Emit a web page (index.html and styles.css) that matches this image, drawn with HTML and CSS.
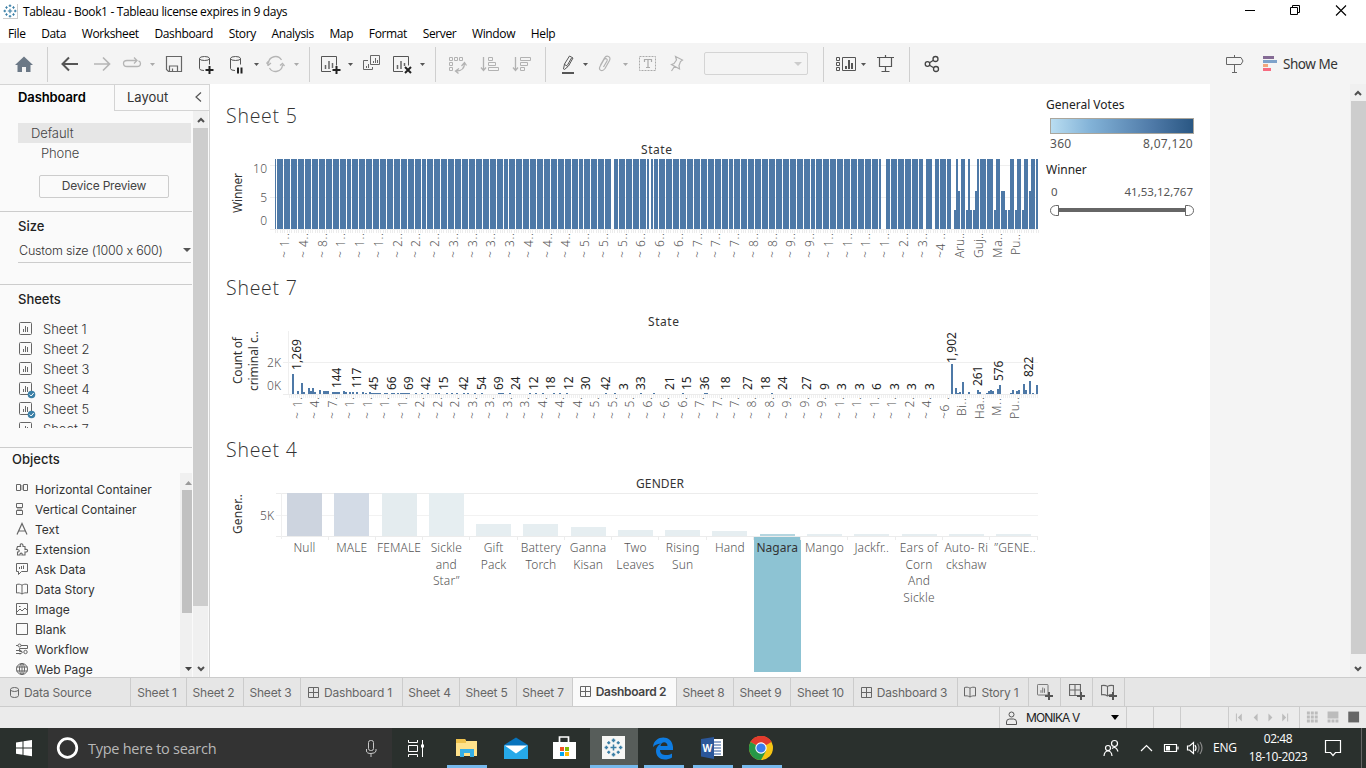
FILE: index.html
```html
<!DOCTYPE html>
<html lang="en">
<head>
<meta charset="utf-8">
<title>Tableau - Book1</title>
<link rel="stylesheet" href="styles.css">
</head>
<body>
<svg class="defs" width="0" height="0" aria-hidden="true">
  <symbol id="spark" viewBox="0 0 16 16"><g fill="none" stroke="#3b7fa6" stroke-width="1.3"><path d="M8 5.5v5M5.5 8h5"/><path d="M8 .5v3M6.5 2h3M8 12.500v3M6.500 14h3M.5 8h3M2 6.500v3M12.500 8h3M14 6.500v3M4 2.700v2.600M2.700 4h2.600M12 2.700v2.600M10.700 4h2.600M4 10.700v2.600M2.700 12h2.600M12 10.700v2.600M10.700 12h2.600"/></g></symbol>
  <symbol id="sheet" viewBox="0 0 17 17"><rect x=".5" y=".5" width="12" height="12" rx="1" fill="none" stroke="#666"/><path d="M4.500 7v3M6.500 4v6M8.500 5v5" stroke="#666" fill="none"/></symbol>
  <symbol id="grid" viewBox="0 0 11 11"><path d="M.5.5h10v10H.5zM5.500.5v10M.5 5.500h10" fill="none" stroke="#666"/></symbol>
  <symbol id="book" viewBox="0 0 12 12"><path d="M.5 1.500C2.500 1 4 1 6 2.200 8 1 9.500 1 11.500 1.500v8.500C9.500 9.600 8 9.800 6 11 4 9.800 2.500 9.600.5 10zM6 2.200V11" fill="none" stroke="#666"/></symbol>
  <symbol id="up" viewBox="0 0 8 6"><path d="M1 5l3-3 3 3" fill="none" stroke="#505050" stroke-width="2"/></symbol>
  <symbol id="down" viewBox="0 0 8 6"><path d="M1 1l3 3 3-3" fill="none" stroke="#505050" stroke-width="2"/></symbol>
</svg>

<header class="titlebar">
  <svg class="logo" width="15" height="15"><use href="#spark"/></svg>
  <span class="title">Tableau - Book1 - Tableau license expires in 9 days</span>
  <svg class="winbuttons" width="136" height="23" viewBox="1230 0 136 23" fill="none" stroke="#000"><path d="M1245 10.500h10"/><path d="M1290.500 7.500h7v7h-7zM1292.500 7V5.500h7v7H1298"/><path d="M1336 5.500l10 10M1346 5.500l-10 10" stroke-width="1.100"/></svg>
</header>
<nav class="menu">
  <span>File</span><span>Data</span><span>Worksheet</span><span>Dashboard</span><span>Story</span><span>Analysis</span><span>Map</span><span>Format</span><span>Server</span><span>Window</span><span>Help</span>
</nav>

<div class="toolbar">
  <svg width="47" height="40" viewBox="0 44 47 40"><path d="M15 65l9-8.500L33 65h-2.500v7H26v-5h-4v5h-4.500v-7z" fill="#6b7886"/></svg>
  <i class="sep"></i>
  <svg width="42" height="40" viewBox="48 44 42 40"><path d="M78 64H63M69 57.500L62.500 64l6.500 6.500" fill="none" stroke="#555" stroke-width="2"/></svg>
  <svg width="28" height="40" viewBox="90 44 28 40"><path d="M94 64h15M103 57.500l6.500 6.500-6.500 6.500" fill="none" stroke="#b5b5b5" stroke-width="1.700"/></svg>
  <svg width="42" height="40" viewBox="118 44 42 40"><path d="M132 60.500h-5q-3.500 0-3.500 3t3.500 3h10q3.500 0 3.500-3 0-2-2-2.700M132 60.500h5M134 57.500l3 3-3 3" fill="none" stroke="#b5b5b5" stroke-width="1.300"/><path d="M150 63h5l-2.500 3z" fill="#aaa"/></svg>
  <svg width="30" height="40" viewBox="160 44 30 40"><path d="M166.500 56.500h15v15h-13l-2-2zM169.500 71v-5h8v5M172.500 68.500v3" fill="none" stroke="#666" stroke-width="1.200"/></svg>
  <svg width="30" height="40" viewBox="190 44 30 40"><g fill="none" stroke="#555"><ellipse cx="204.500" cy="58.500" rx="5" ry="2"/><path d="M199.500 58.500v10q0 2 4.500 2M209.500 58.500v6"/></g><path d="M209.500 66v8M205.500 70h8" stroke="#222" stroke-width="2"/></svg>
  <svg width="42" height="40" viewBox="220 44 42 40"><g fill="none" stroke="#555"><ellipse cx="235.500" cy="58.500" rx="5" ry="2"/><path d="M230.500 58.500v10q0 2 4.500 2M240.500 58.500v6"/></g><path d="M238 67.500v6M241.500 67.500v6" stroke="#222" stroke-width="2"/><path d="M254 63h5l-2.500 3z" fill="#555"/></svg>
  <svg width="47" height="40" viewBox="262 44 47 40"><path d="M268.500 63a7 7 0 0 1 13-3M282.500 65a7 7 0 0 1-13 3M268 66v-5M266.500 62.500l2 2.500 2.500-2M284.500 66l-2-2.500-2.500 2" fill="none" stroke="#b5b5b5" stroke-width="1.300"/><path d="M294 63h5l-2.500 3z" fill="#aaa"/></svg>
  <i class="sep"></i>
  <svg width="48" height="40" viewBox="310 44 48 40"><path d="M331 71.500h-9.500v-15h15v9" fill="none" stroke="#555"/><path d="M325.500 65v4M329 61v8M332.500 63v5" stroke="#666" stroke-width="1.500"/><path d="M336.500 66v8M332.500 70h8" stroke="#222" stroke-width="2"/><path d="M348 63h5l-2.500 3z" fill="#555"/></svg>
  <svg width="28" height="40" viewBox="358 44 28 40" fill="none" stroke="#666"><path d="M370.500 55.500h9v9h-9zM368 60.500h-4.500v9h9V67M373.500 61v2M375.500 58v5M377.500 60v3M366.500 66v2M368.500 64v4"/></svg>
  <svg width="49" height="40" viewBox="386 44 49 40"><path d="M403 71.500h-9.500v-15h15v9" fill="none" stroke="#555"/><path d="M397.500 65v4M401 61v8M404.500 63v3" stroke="#666" stroke-width="1.500"/><path d="M405 67l6 6M411 67l-6 6" stroke="#222" stroke-width="2"/><path d="M420 63h5l-2.500 3z" fill="#555"/></svg>
  <i class="sep"></i>
  <svg width="37" height="40" viewBox="436 44 37 40" fill="none" stroke="#b2b2b2"><path d="M449.500 57.500h3v3h-3zM454.500 57.500h3v3h-3zM459.500 57.500h3v3h-3zM449.500 62.500h3v3h-3zM449.500 67.500h3v3h-3z"/><path d="M464.500 63q0 8-8 8M461.500 66l3-3.500 2 3M459 68.500l-3.500 2.500 3 2.500" stroke-width="1.300"/></svg>
  <svg width="32" height="40" viewBox="473 44 32 40" fill="none" stroke="#b2b2b2"><path d="M483.500 57v13M481 67.500l2.500 3 2.500-3" stroke-width="1.300"/><path d="M488.500 57.500h4v3h-4zM488.500 62.500h7v3h-7zM488.500 67.500h10v3h-10z"/></svg>
  <svg width="40" height="40" viewBox="505 44 40 40" fill="none" stroke="#b2b2b2"><path d="M515.500 57v13M513 67.500l2.500 3 2.500-3" stroke-width="1.300"/><path d="M520.500 57.500h10v3h-10zM520.500 62.500h7v3h-7zM520.500 67.500h4v3h-4z"/></svg>
  <i class="sep"></i>
  <svg width="47" height="40" viewBox="546 44 47 40"><path d="M563.500 69l1-5 5-8 3.500 2-4.500 8-4 3.500zM564.500 64.500l3.500 2M567.500 65l4-7" fill="none" stroke="#555"/><path d="M562 73h12" stroke="#555" stroke-width="2"/><path d="M583 63h5l-2.500 3z" fill="#555"/></svg>
  <svg width="40" height="40" viewBox="593 44 40 40"><path d="M600.500 65l4-7c2-3.500 7-1.500 5 2.500l-4.500 8c-3 4-7 1.500-5-2l4-7c1.500-2 4-.5 3 1.500l-3.500 6" fill="none" stroke="#b2b2b2" stroke-width="1.200"/><path d="M623 63h5l-2.500 3z" fill="#aaa"/></svg>
  <svg width="29" height="40" viewBox="633 44 29 40" fill="none" stroke="#aaa"><rect x="639.500" y="56.500" width="16" height="14" stroke-dasharray="2 1"/><path d="M644.500 62v-2.500h7V62M648 59.500v8M646 67.500h4" stroke-width="1.200"/></svg>
  <svg width="38" height="40" viewBox="662 44 38 40" fill="none" stroke="#b2b2b2"><path d="M675.500 56.500l7 3.500-2 1.500-1.500 4 .5 3.500-8-4.500 2.500-1 2.500-3.500zM674.500 66.500l-3 4.500" stroke-width="1.200"/></svg>
  <span class="combo"><svg width="8" height="4"><path d="M0 0h8l-4 4z" fill="#ccc"/></svg></span>
  <i class="sep after-combo"></i>
  <svg width="49" height="40" viewBox="824 44 49 40"><path d="M836.500 57.500h3v3h-3zM836.500 62.500h3v3h-3zM836.500 67.500h3v3h-3zM842.500 57.500h13v13h-13z" fill="none" stroke="#555"/><path d="M846 66v3M849 60v9M852 63v6" stroke="#555" stroke-width="2"/><path d="M861 63h5l-2.500 3z" fill="#555"/></svg>
  <svg width="36" height="40" viewBox="873 44 36 40" fill="none" stroke="#555"><path d="M877 57.500h17M879.500 58v8.500h12V58M885.500 55v2M885.500 66.500v5M881.500 71.500h8" stroke-width="1.200"/></svg>
  <i class="sep"></i>
  <svg width="40" height="40" viewBox="910 44 40 40" fill="none" stroke="#444" stroke-width="1.300"><circle cx="927.500" cy="64" r="2.300"/><circle cx="935.500" cy="59" r="2.500"/><circle cx="936" cy="69" r="2.500"/><path d="M929.500 62.700l4-2.500M929.500 65.300l4.200 2.500"/></svg>
  <svg class="sign" width="30" height="40" viewBox="1225 44 30 40" fill="none" stroke="#666"><path d="M1226.500 57.500h14.500l2 3.500-2 3.500h-14.500zM1234.500 55v2.500M1234.500 64.500v7.500M1232 72.500h5"/></svg>
  <svg width="28" height="40" viewBox="1255 44 28 40"><path d="M1263 56h11v3h-11z" fill="#846a94"/><path d="M1263 60h14v3h-14z" fill="#7ea2ca"/><path d="M1263 64h5v3h-5z" fill="#f1a67c"/><path d="M1263 68h8v3h-8z" fill="#f76b80"/></svg>
  <span class="showme">Show Me</span>
</div>

<main class="main">
  <aside class="side">
    <div class="side-tabs"><b>Dashboard</b><span class="layout">Layout</span><svg width="24" height="25" viewBox="185 85 24 25"><path d="M201 92.500l-5 4.500 5 4.500" fill="none" stroke="#555" stroke-width="1.200"/></svg></div>
    <div class="side-row">
      <div class="side-body">
        <div class="device"><div class="default">Default</div><div class="phone">Phone</div><div class="preview">Device Preview</div></div>
        <div class="size"><h3>Size</h3><div class="select"><span>Custom size (1000 x 600)</span><svg width="8" height="4"><path d="M0 0h8l-4 4z" fill="#555"/></svg></div></div>
        <div class="sheets"><h3>Sheets</h3><div class="sheet-list" id="sheet-list"></div></div>
        <div class="objects">
          <div class="obj-left"><h3>Objects</h3>
            <ul>
              <li><svg width="14" height="14" fill="none" stroke="#666"><path d="M1.500 2.500h4v6h-4zM8.500 2.500h4v6h-4z"/><path d="M6 3h2v5H6z" fill="#bbb" stroke="none"/></svg>Horizontal Container</li>
              <li><svg width="14" height="14" fill="none" stroke="#666"><path d="M1.500 1.500h6v4h-6zM1.500 8.500h6v4h-6z"/><path d="M2 6h5v2H2z" fill="#bbb" stroke="none"/></svg>Vertical Container</li>
              <li><svg width="14" height="14" fill="none" stroke="#666" stroke-width="1.200"><path d="M2 12.500L7 1.500l5 11M3.500 9h7"/></svg>Text</li>
              <li><svg width="14" height="14" fill="none" stroke="#666" stroke-width="1.100"><path d="M2.500 4.500h3c-1.500-3.500 3-4 2.500 0h2v3c3.500-1 3.500 3 0 2.500v3H7c1-2.500-2.500-2.500-2 0H2.500V10C5 10 5 7 1.500 7.500z"/></svg>Extension</li>
              <li><svg width="14" height="14" fill="none" stroke="#666"><path d="M1.500 1.500h11v8h-6L3.500 12.500v-3h-2zM4.500 5v2M6.500 4v3M8.500 3.500V7"/></svg>Ask Data</li>
              <li><svg width="14" height="14"><use href="#book" x="1" y="1" width="12" height="12"/></svg>Data Story</li>
              <li><svg width="14" height="14" fill="none" stroke="#666"><path d="M1.500 1.500h11v11h-11zM2 10l3-3 2 2 3-3 2 2M4 4.500h1.500"/></svg>Image</li>
              <li><svg width="14" height="14" fill="none" stroke="#666"><path d="M1.500 1.500h11v11h-11z"/></svg>Blank</li>
              <li><svg width="14" height="14" fill="none" stroke="#666"><path d="M1 3.500h2M6 3.500h6.500v3h-8v3H7M1 8.500h3M1 11.500h5"/><circle cx="4.500" cy="3.500" r="1.500"/><circle cx="10.500" cy="10" r="1.700"/><path d="M5 8l2.500 2L5 12.500"/></svg>Workflow</li>
              <li><svg width="14" height="14" fill="none" stroke="#666"><circle cx="7" cy="7" r="5.500"/><ellipse cx="7" cy="7" rx="2.500" ry="5.500"/><path d="M1.500 5h11M1.500 9h11M7 1.500v11"/></svg>Web Page</li>
            </ul>
          </div>
          <div class="inner-scroll"><svg width="12" height="17"><path d="M5 12h7l-3.500-4z" fill="#999"/></svg><div class="thumb"></div><svg width="12" height="17"><path d="M5 7h7l-3.500 4z" fill="#444"/></svg></div>
        </div>
      </div>
      <div class="scroll side-scroll"><svg width="8" height="6"><use href="#up"/></svg><div class="thumb"></div><svg width="8" height="6"><use href="#down"/></svg></div>
    </div>
  </aside>

  <section class="canvas">
    <div class="views">
      <article class="view v5"><h2>Sheet 5</h2><svg id="chart5" width="832" height="138" viewBox="210 130 832 138"></svg></article>
      <article class="view v7"><h2>Sheet 7</h2><svg id="chart7" width="832" height="126" viewBox="210 302 832 126"></svg></article>
      <article class="view v4"><h2>Sheet 4</h2><svg id="chart4" width="832" height="213" viewBox="210 464 832 213"></svg></article>
    </div>
    <div class="legends">
      <h4>General Votes</h4>
      <div class="ramp"></div>
      <div class="range"><span>360</span><span>8,07,120</span></div>
      <h4 class="winner">Winner</h4>
      <div class="range small"><span>0</span><span>41,53,12,767</span></div>
      <svg width="146" height="14" viewBox="1049 204 146 14"><path d="M1055 210h134" stroke="#666" stroke-width="4"/><path d="M1058.500 205.500v10h-3q-5-1-5-5t5-5zM1185.500 205.500v10h3q5-1 5-5t-5-5z" fill="#fff" stroke="#666"/></svg>
    </div>
  </section>
  <div class="blank"></div>
  <div class="scroll page-scroll"><svg width="8" height="6"><use href="#up"/></svg><div class="thumb"></div><svg width="8" height="6"><use href="#down"/></svg></div>
</main>

<div class="tabs">
  <span class="tab source"><svg width="9" height="11" fill="none" stroke="#666"><ellipse cx="4.500" cy="2.500" rx="4" ry="2"/><path d="M.5 2.500v6q0 2 4 2t4-2v-6"/></svg>Data Source</span>
  <span class="tab t56">Sheet 1</span><span class="tab t57">Sheet 2</span><span class="tab t57">Sheet 3</span>
  <span class="tab t102"><svg width="11" height="11"><use href="#grid"/></svg>Dashboard 1</span>
  <span class="tab t57">Sheet 4</span><span class="tab t57">Sheet 5</span><span class="tab t57 last">Sheet 7</span>
  <span class="tab active"><svg width="11" height="11"><use href="#grid"/></svg>Dashboard 2</span>
  <span class="tab t57">Sheet 8</span><span class="tab t57">Sheet 9</span><span class="tab t62">Sheet 10</span>
  <span class="tab t104"><svg width="11" height="11"><use href="#grid"/></svg>Dashboard 3</span>
  <span class="tab t71"><svg width="12" height="12"><use href="#book"/></svg>Story 1</span>
  <span class="tab add"><svg width="17" height="17"><use href="#sheet" width="15" height="15"/><path d="M8 12h8M12 8v8" stroke="#555" stroke-width="2"/></svg></span>
  <span class="tab add"><svg width="17" height="17"><use href="#grid" width="12" height="12"/><path d="M8 12h8M12 8v8" stroke="#555" stroke-width="2"/></svg></span>
  <span class="tab add"><svg width="17" height="17"><use href="#book" width="13" height="13"/><path d="M8 12h8M12 8v8" stroke="#555" stroke-width="2"/></svg></span>
</div>

<div class="status">
  <span class="user"><svg width="11" height="14" fill="none" stroke="#555"><circle cx="5.500" cy="3.500" r="2.500"/><path d="M.5 13.500v-2.500q0-3 3-3h4q3 0 3 3v2.500z"/></svg><em>MONIKA V</em><svg width="8" height="5"><path d="M0 0h8l-4 5z"/></svg></span>
  <span class="c1"></span><span class="c1"></span><span class="c2"></span>
  <svg class="pager" width="71" height="20" viewBox="1229 708 71 20" fill="#bcbcbc"><path d="M1236 714h1v8h-1zM1242 714v8l-4-4zM1258 714v8l-4-4zM1269 714v8l4-4zM1283 714v8l4-4zM1288 714h1v8h-1z"/></svg>
  <svg class="modes" width="66" height="20" viewBox="1300 708 66 20"><path d="M1307 712h3v3h-3zM1311 712h3v3h-3zM1315 712h3v3h-3zM1307 716h3v3h-3zM1311 716h3v3h-3zM1315 716h3v3h-3zM1307 720h3v3h-3zM1311 720h3v3h-3zM1315 720h3v3h-3zM1328 712h11v7h-11zM1328 720h3v3h-3zM1332 720h3v3h-3zM1336 720h3v3h-3z" fill="#bcbcbc"/><path d="M1349 712h11v11h-11z" fill="#666"/></svg>
</div>

<footer class="taskbar">
  <svg width="48" height="40" viewBox="0 728 48 40"><path d="M16 742.500l6.500-1v6H16zM23.500 741.300l8.500-1.300v7.500h-8.500zM16 748.500h6.500v6.200l-6.500-1zM23.500 748.500H32v7.700l-8.500-1.300z" fill="#fff"/></svg>
  <div class="search"><svg width="40" height="40" viewBox="48 728 40 40"><circle cx="67.500" cy="748" r="9.300" fill="none" stroke="#fff" stroke-width="2.700"/></svg><span>Type here to search</span><svg width="40" height="40" viewBox="352 728 40 40" fill="none" stroke="#c8c8c8"><rect x="368.500" y="740.500" width="5" height="10" rx="2"/><path d="M366.500 749v2q0 2.500 4.500 2.500t5-2.500v-2M371 754v3"/></svg></div>
  <svg width="50" height="40" viewBox="392 728 50 40" fill="none" stroke="#fff"><path d="M408.500 742.500v-2.500M408.500 742.500h9v-2.500M408.500 745.500h9v6h-9zM408.500 757v-2.500h9v2.500M422.500 740v17"/><path d="M421 744.500h3v3h-3z" fill="#fff" stroke="none"/></svg>
  <span class="app on"><svg width="48" height="37" viewBox="442 728 48 37"><path d="M456 739h9l1 2h11v15h-21z" fill="#ffe28b"/><path d="M456 739h9l1 2v2h-10z" fill="#efc24d"/><path d="M460 757v-8h14v8h-4v-4h-6v4z" fill="#36afe6"/></svg></span>
  <span class="app"><svg width="48" height="37" viewBox="491 728 48 37"><path d="M504 745l12-7.500 12 7.500v14h-24z" fill="#0873bc"/><path d="M505 745.500h22v5l-10 5-12-5z" fill="#fff"/><path d="M504 745l12 8.500L528 745v14h-24z" fill="#26a9e9"/></svg></span>
  <span class="app store"><svg width="50" height="37" viewBox="540 728 50 37"><path d="M559.500 744v-7h9v7" fill="none" stroke="#fff" stroke-width="1.700"/><path d="M553 742h23v17h-23z" fill="#fff"/><path d="M560 747h4v4h-4z" fill="#f35325"/><path d="M565 747h4v4h-4z" fill="#81bc06"/><path d="M560 752h4v4h-4z" fill="#05a6f0"/><path d="M565 752h4v4h-4z" fill="#ffba08"/></svg></span>
  <span class="app on full"><svg width="48" height="37" viewBox="590 728 48 37"><path d="M602 736h23v23h-23z" fill="#f7f7f5"/><use href="#spark" x="604" y="738" width="19" height="19"/></svg></span>
  <span class="app on"><svg width="48" height="37" viewBox="639 728 48 37"><path d="M653 747c1-12 19-13 20 0v3h-13c0 6 8 6 12 3.500v4c-8 4.500-16 1-16-6.500 0-3 1.500-5.500 5-7.500-4 .5-6.500 1.500-8 3.500zM660.500 746h7c0-5-6.500-5-7 0z" fill="#0e7ce2" fill-rule="evenodd"/></svg></span>
  <span class="app on"><svg width="48" height="37" viewBox="688 728 48 37"><path d="M711 739h12v17h-12z" fill="#fff"/><path d="M713 742h8M713 745h8M713 748h8M713 751h8M713 754h8" stroke="#2b579a"/><path d="M701 739l13-2v22l-13-2.500z" fill="#2b579a"/><text x="702.500" y="752" class="word">W</text></svg></span>
  <span class="app on"><svg width="48" height="37" viewBox="737 728 48 37"><circle cx="761" cy="748" r="12" fill="#f6c414"/><path d="M761 748l-10.400-6A12 12 0 0 1 771.400 742z" fill="#e33b2e"/><path d="M750.600 742A12 12 0 0 0 761 760l5-9-5-3z" fill="#279847"/><path d="M750.600 742A12 12 0 0 1 771.400 742H761z" fill="#e33b2e"/><circle cx="761" cy="748" r="5.700" fill="#fff"/><circle cx="761" cy="748" r="4.600" fill="#3b7ded"/></svg></span>
  <svg class="tray" width="105" height="40" viewBox="1098 728 105 40" fill="none" stroke="#fff" stroke-width="1.200"><circle cx="1114.500" cy="743.500" r="3"/><circle cx="1108" cy="748" r="2.500"/><path d="M1104 756q.5-5 4-5t4 5M1112 748.500q4-3 6 3"/><path d="M1141 751l5.500-5.500 5.500 5.500"/><path d="M1164.500 744.500h12v7h-12zM1178 746.500v3"/><path d="M1166 746h4v4.500h-4z" fill="#fff" stroke="none"/><path d="M1187.500 746h2l4-3.500v11l-4-3.500h-2zM1195 745q2 3 0 6"/><path d="M1197.500 743.500q3 4.500 0 9M1200 742q4 6 0 12" stroke="#888"/></svg>
  <span class="lang">ENG</span>
  <span class="clock"><span>02:48</span><span>18-10-2023</span></span>
  <svg width="51" height="40" viewBox="1315 728 51 40" fill="none" stroke="#fff" stroke-width="1.200"><path d="M1325.500 740.500h15v12h-5l-2.500 3-2.500-3h-5z"/><path d="M1361.500 728v40" stroke="#666" stroke-width="1"/></svg>
</footer>
<script src="app.js"></script>
</body>
</html>
```
FILE: styles.css
```css
* { box-sizing: border-box; }
body { margin: 0; width: 1366px; height: 768px; overflow: hidden; background: #fff; font-family: "Open Sans", "Noto Sans", sans-serif; font-size: 12px; color: #333; display: flex; flex-direction: column; }
svg { display: block; flex: none; }
.defs { display: none; }
h2, h3, h4, ul { margin: 0; padding: 0; }
span, b, li { white-space: nowrap; }

.titlebar { height: 23px; display: flex; align-items: center; flex: none; color: #000; }
.logo { margin-left: 3px; border-right: 1px solid #ccc; border-bottom: 1px solid #ccc; }
.title { margin-left: 5px; font-size: 12px; letter-spacing: -.35px; }
.winbuttons { margin-left: auto; }
.menu { height: 20px; display: flex; gap: 15.700px; padding-left: 8px; align-items: center; color: #000; font-size: 12px; letter-spacing: -.37px; flex: none; }

.toolbar { height: 41px; background: #f4f4f4; display: flex; align-items: flex-end; flex: none; }
.sep { width: 1px; height: 35px; margin-bottom: 2px; background: #cfcfcf; }
.combo { width: 104px; height: 23px; margin: 0 0 9px 4px; border: 1px solid #d4d4d4; border-radius: 2px; display: flex; align-items: center; justify-content: flex-end; padding-right: 5px; }
.after-combo { margin-left: 15px; }
.sign { margin-left: 275px; }
.showme { font-size: 13.500px; line-height: 40px; letter-spacing: -.45px; font-family: "Noto Sans", sans-serif; }

.main { height: 593px; display: flex; flex: none; }
.side { width: 210px; background: #fafafa; border-right: 1px solid #d4d4d4; display: flex; flex-direction: column; font-family: Inter, "Open Sans", sans-serif; font-feature-settings: "calt" 0; }
.side-tabs { height: 27px; display: flex; border-top: 1px solid #d4d4d4; flex: none; font-size: 13px; line-height: 25px; }
.side-tabs b { width: 114px; padding-left: 18px; color: #000; font-weight: 600; letter-spacing: -.1px; }
.side-tabs .layout { width: 71px; padding-left: 12px; border-left: 1px solid #d4d4d4; border-bottom: 1px solid #d4d4d4; }
.side-tabs svg { border-bottom: 1px solid #d4d4d4; height: 26px; }
.side-row { display: flex; height: 566px; }
.side-body { width: 193px; height: 566px; }
.device { height: 101px; padding: 12px 1px 0 18px; border-bottom: 1px solid #ccc; width: 192px; font-size: 13px; color: #444; letter-spacing: -.1px; }
.default { background: #e6e6e6; height: 20px; line-height: 20px; padding-left: 13px; font-weight: 300; }
.phone { height: 20px; line-height: 20px; padding-left: 23px; font-weight: 300; }
.preview { width: 130px; height: 23px; margin: 12px 0 0 21px; border: 1px solid #ccc; border-radius: 2px; text-align: center; line-height: 20px; font-size: 12px; letter-spacing: -.2px; }
.side h3 { font-size: 13px; font-weight: 500; line-height: 20px; color: #222; margin-top: -1px; }
.size { height: 73px; width: 192px; padding: 5px 1px 0 18px; border-bottom: 1px solid #ccc; }
.select { height: 27px; border-bottom: 1px solid #ccc; display: flex; justify-content: space-between; align-items: center; padding: 2px 0 0 1px; font-size: 12.500px; font-weight: 300; letter-spacing: -.2px; }
.sheets { height: 163px; width: 192px; padding: 5px 0 0 18px; border-bottom: 1px solid #ccc; }
.sheet-list { margin-top: 10px; height: 109px; overflow: hidden; font-size: 13px; font-weight: 300; color: #333; }
.sheet-item { display: flex; height: 20px; line-height: 20px; gap: 7px; padding-left: 1px; }
.sheet-item svg { margin-top: 3px; }
.objects { display: flex; height: 229px; overflow: hidden; }
.obj-left { width: 180px; padding: 2px 0 0 12px; }
.obj-left ul { list-style: none; margin-top: 11px; }
.obj-left li { display: flex; gap: 6px; height: 20px; line-height: 20px; padding-left: 3px; font-size: 12px; }
.obj-left li svg { margin-top: 2px; }
.inner-scroll { width: 12px; margin-top: 25px; background: #f0f0f0; height: 204px; display: flex; flex-direction: column; justify-content: space-between; }
.inner-scroll .thumb { background: #c1c1c1; height: 123px; margin: 0 0 47px 2px; }
.scroll { background: #f0f0f0; display: flex; flex-direction: column; align-items: center; flex: none; }
.side-scroll { width: 15px; height: 566px; padding: 6px 0 5px; }
.side-scroll .thumb { width: 15px; height: 478px; margin: 5px 0 auto; background: #cdcdcd; }
.canvas { width: 1000px; display: flex; background: #fff; }
.views { width: 832px; display: flex; flex-direction: column; }
.view h2 { font-size: 19.500px; font-weight: 300; color: #333; padding-left: 16px; line-height: 31px; height: 30px; letter-spacing: .75px; }
.v5 { padding-top: 16px; height: 188px; }
.v7 { height: 162px; }
.v4 { height: 243px; }
.legends { padding: 13px 0 0 4px; width: 168px; font-family: "Noto Sans", sans-serif; }
.legends h4 { font-size: 12px; font-weight: 400; line-height: 16px; color: #222; }
.legends svg { margin: 4px 0 0 3px; }
.ramp { margin: 5px 0 0 4px; width: 144px; height: 16px; border: 1px solid #aaa69c; background: linear-gradient(90deg, #b9ddf1, #82b2d7 28%, #4e79a7 72%, #2a5783); }
.range { width: 143px; margin: 2px 0 0 4px; display: flex; justify-content: space-between; font-size: 12px; line-height: 16px; color: #555; letter-spacing: .3px; }
.range.small { font-size: 11.500px; margin-top: 6px; padding-left: 1px; letter-spacing: 0; }
.legends .winner { margin-top: 10px; }
.blank { width: 140px; background: #f4f4f4; }
.page-scroll { width: 16px; padding: 6px 0 5px; }
.page-scroll .thumb { width: 15px; height: 553px; margin: 5px 0 auto; background: #cdcdcd; }

.tabs { height: 30px; background: #e6e6e6; border-top: 1px solid #ccc; border-bottom: 1px solid #ccc; display: flex; flex: none; color: #666; font: 12px/29px Inter, sans-serif; letter-spacing: -.2px; }
.tab { display: flex; align-items: center; gap: 5px; justify-content: center; border-right: 1px solid #ccc; height: 28px; padding-right: 3px; }
.source { width: 131px; justify-content: flex-start; padding-left: 10px; }
.t56 { width: 56px; } .t57 { width: 57px; } .t102 { width: 102px; } .t62 { width: 63px; } .t104 { width: 104px; } .t71 { width: 71px; }
.tab.last { width: 56px; }
.add { width: 32px; padding-right: 0; padding-left: 2px; }
.active { width: 104px; background: #fafafa; color: #444; font-weight: 600; letter-spacing: -.3px; padding-bottom: 2px; }
.status { height: 21px; background: #ebebeb; display: flex; flex: none; }
.user { margin-left: 999px; width: 127px; border-left: 1px solid #ccc; display: flex; align-items: center; padding: 0 7px 0 6px; color: #222; }
.user em { font: 12px Inter, sans-serif; letter-spacing: -.85px; margin: 0 auto 0 9px; }
.c1, .c2 { width: 27px; border-left: 1px solid #ccc; }
.c2 { width: 48px; }
.pager, .modes { border-left: 1px solid #ccc; height: 21px; }

.taskbar { height: 40px; background: #2a302d; display: flex; flex: none; color: #fff; }
.search { width: 344px; background: #333; display: flex; }
.search span { font-size: 14.500px; line-height: 41px; color: #b8b8b8; margin-right: auto; letter-spacing: -.27px; }
.app { width: 49px; display: flex; flex-direction: column; }
.app.on::after { content: ""; height: 3px; width: 40px; margin-left: 5px; background: #76b9ed; flex: none; }
.app.store { width: 50px; }
.app.full { background: #575d5a; width: 48px; margin-right: 1px; }
.app.full::after { width: 48px; margin-left: 0; }
.word { font: bold 10px "Open Sans", sans-serif; fill: #fff; }
.tray { margin-left: auto; }
.lang { width: 38px; padding-left: 10px; line-height: 39px; font-size: 12px; letter-spacing: -.2px; }
.clock { width: 74px; display: flex; flex-direction: column; align-items: center; font-size: 12px; line-height: 18px; padding-top: 2px; letter-spacing: -.4px; }

.chart-text { font: 12px "Noto Sans", sans-serif; fill: #333; }
.chart-text.axis { fill: #555; font-weight: 300; }
.chart-text.cat { letter-spacing: .15px; }
.chart-text.value { fill: #222; }
.chart-text.picked { fill: #333; }
```
FILE: app.js
```js
const BLUE = "#4e79a7";
const rect = (x, y, w, h, fill) => `<rect x="${x}" y="${y}" width="${w}" height="${h}" fill="${fill}"/>`;
const text = (s, x, y, cls = "", len = 0, anchor = "middle") =>
  `<text class="chart-text ${cls}" x="${x}" y="${y}" text-anchor="${anchor}"${len ? ` textLength="${len}"` : ""}>${s}</text>`;
// Vertical text reading upwards; x is the centre line, y the lower end.
const vtext = (s, x, y, cls = "", len = 0) =>
  `<text class="chart-text ${cls}" transform="translate(${x + 4.3} ${y}) rotate(-90)"${len ? ` textLength="${len}"` : ""}>${s}</text>`;

function sheetList() {
  const names = [["Sheet 1"], ["Sheet 2"], ["Sheet 3"], ["Sheet 4", 1], ["Sheet 5", 1], ["Sheet 7"]];
  document.getElementById("sheet-list").innerHTML = names.map(([n, used]) =>
    `<div class="sheet-item"><svg width="17" height="17"><use href="#sheet" width="17" height="17"/>${used
      ? '<circle cx="12.500" cy="12.500" r="3.800" fill="#3b7fa6"/><path d="M10.700 12.500l1.500 1.500 2.500-3" fill="none" stroke="#fff"/>' : ""}</svg><span>${n}</span></div>`).join("");
}

function chart5() {
  let s = rect(270, 165, 768, 1, "#efefef") + rect(270, 197, 768, 1, "#efefef") + rect(270, 229, 768, 1, "#efefef");
  let x = 277;
  s += rect(275, 159, 1, 70, BLUE);
  const run = [10, 10, 11, 10, 10, 10, 11, 10];
  let n = 0, r = 0;
  while (x < 836) {
    const step = n === run[r] ? 5 : 7;
    if (step === 5) { n = 0; r++; } else n++;
    s += rect(x, 159, Math.min(step - 1, 843 - x), 70, BLUE);
    x += step;
  }
  s += rect(611, 159, 3, 70, "#fff") + rect(649, 159, 2, 70, "#fff") + rect(x - 1, 159, 1, 70, "#fff");
  // [x, width, level]: level 0 is the full height, 1 and 2 are shorter
  [[837,6,0],[844,6,0],[851,6,0],[858,6,0],[865,6,0],[872,6,0],[879,2,0],[886,4,0],[891,6,0],[898,6,0],[905,6,0],[912,6,0],[919,4,0],
   [926,6,0],[935,4,0],[940,6,0],[947,4,0],[954,2,2],[956,2,0],[958,2,1],[961,4,0],[966,2,2],[968,2,0],[970,2,2],[973,2,2],[975,2,1],
   [977,2,0],[980,6,0],[987,6,0],[994,2,2],[996,4,0],[1001,4,1],[1005,2,2],[1008,2,2],[1010,4,0],[1015,2,2],[1017,4,0],[1022,2,2],
   [1024,4,0],[1029,2,1],[1031,4,0],[1036,2,0]].forEach(([bx, w, t]) => {
    const top = [159, 191, 210][t];
    s += rect(bx, top, w, 229 - top, BLUE);
  });
  for (let t = 275; t < 1038; t += 2.34) s += rect(Math.round(t), 230, 1, 3, "#ececec");
  s += text("State", 656.500, 154, "", 31);
  s += vtext("Winner", 238, 213, "", 40);
  s += text("10", 267, 173, "axis", 14, "end") + text("5", 267, 202, "axis", 0, "end") + text("0", 267, 225, "axis", 0, "end");
  const labels = [..."148111222333344455566677788991111" + "23"].map(c => `~ ${c}..`).concat("~4 ..", "Aru..", "Guj..", "Ma..");
  labels.forEach((l, i) => { s += vtext(l, 284.700 + 18.750 * i, 258, "axis", 25); });
  s += vtext("Pu..", 284.700 + 18.750 * labels.length, 255, "axis", 21);
  document.getElementById("chart5").innerHTML = s;
}

function chart7() {
  let s = rect(283, 362, 755, 1, "#efefef") + rect(283, 394, 755, 1, "#ececec") + rect(288, 331, 1, 63, "#efefef");
  for (let t = 289; t < 1038; t += 2) s += rect(t, 395, 1, 3, "#f0f0f0");
  [[292,20],[297,3],[301,11],[303,2],[308,6],[310,3],[312,6],[314,2],[319,4],[323,3],[325,3],[327,3],[332,2],[334,2],[336,2],[338,2],
   [343,3],[345,2],[349,2],[352,2],[356,2],[362,2],[365,1],[369,2],[371,1],[373,1],[375,1],[377,1],[379,1],[384,1],[386,1],[391,1],
   [393,1],[397,1],[400,1],[402,1],[404,1],[406,1],[408,1],[415,1],[421,1],[427,1],[435,1],[438,1],[446,1],[451,1],[456,1],[463,1],
   [467,1],[474,1],[481,1],[498,1],[500,1],[502,1],[509,1],[529,1],[535,1],[542,1],[553,1],[559,1],[566,1],[605,1],[614,1],[640,1],
   [653,1],[682,1],[704,1],[706,1],[771,1],[951,30],[955,6],[957,1],[959,2],[962,12],[968,2],[977,4],[979,2],[986,1],[988,3],[990,4],
   [992,3],[997,5],[999,9],[1010,1],[1012,4],[1016,3],[1018,4],[1023,10],[1025,4],[1029,13],[1032,1],[1036,9]]
    .forEach(([x, h]) => { s += rect(x, 394 - h, 2, h, BLUE); });
  s += text("State", 663.500, 326, "", 31);
  s += vtext("Count of", 238, 384, "", 47) + vtext("criminal c..", 254, 391, "", 60);
  s += text("2K", 281, 367, "axis", 14, "end") + text("0K", 281, 390, "axis", 14, "end");
  [["1,269",296.700,370],["144",336.700,388],["117",356.700,388],["45",374],["66",391.300],["69",408.700],["42",426],["15",443.300],
   ["42",463.300],["54",481.300],["69",498.700],["24",515.700],["12",533.300],["18",550.700],["12",568.300],["30",585.700],["42",605.300],
   ["3",623.300],["33",640.700],["21",669.300],["15",686.700],["36",704.300],["18",725.700],["27",747.300],["18",765.300],["24",782.700],
   ["27",806.700],["9",824.700],["3",841.700],["3",859.300],["6",876.700],["3",894.300],["3",911.700],["3",929.300],
   ["1,902",951.700,363],["261",977.300,386],["576",999,381],["822",1028.300,377]]
    .forEach(([v, x, y = 390]) => { s += vtext(v, x, y, "value", v.length === 5 ? 31 : v.length * 6.800); });
  const labels = [..."1471111222333344455566677788999111124"].map(c => `~ ${c}.`).concat("~6 .", "Bi..", "Ha..", "M..", "Pu..");
  labels.forEach((l, i) => {
    const narrow = l === "Bi.." || l === "M..";
    s += vtext(l, 297.700 + 17.480 * i, narrow ? 416 : 419, "axis", narrow ? 18 : 22);
  });
  document.getElementById("chart7").innerHTML = s;
}

function chart4() {
  let s = rect(276, 493, 762, 1, "#ececec") + rect(276, 515, 762, 1, "#f2f2f2") + rect(276, 536, 762, 1, "#ececec") + rect(281, 493, 1, 46, "#efefef");
  const cols = [["Null",43,"#cdd4df"],["MALE",43,"#d3dbe6"],["FEMALE",43,"#e4ecef"],["Sickle|and|Star”",43],["Gift|Pack",12],
    ["Battery|Torch",12],["Ganna|Kisan",9],["Two|Leaves",6],["Rising|Sun",6],["Hand",5],["Nagara",2,"#b5d6e0"],["Mango",2],
    ["Jackfr..",2],["Ears of|Corn|And|Sickle",2],["Auto- Ri|ckshaw",2],["”GENE..",2]];
  s += rect(754, 537, 47, 135, "#8dc3d3");
  cols.forEach(([label, h, color = "#e6eef1"], i) => {
    const c = 304.500 + 47.270 * i;
    s += rect(Math.round(c - 17.500), 536 - h, 35, h, color);
    s += rect(Math.round(c + 23), 537, 1, 3, "#ececec");
    label.split("|").forEach((line, k) => {
      s += text(line, i === 15 ? c + 1.5 : c, 552 + Math.round(16.500 * k), i === 10 ? "picked" : "axis cat");
    });
  });
  s += text("GENDER", 660, 488, "", 48);
  s += vtext("Gener..", 238, 534, "", 40);
  s += text("5K", 274, 520, "axis", 14, "end");
  document.getElementById("chart4").innerHTML = s;
}

sheetList();
chart5();
chart7();
chart4();
```
